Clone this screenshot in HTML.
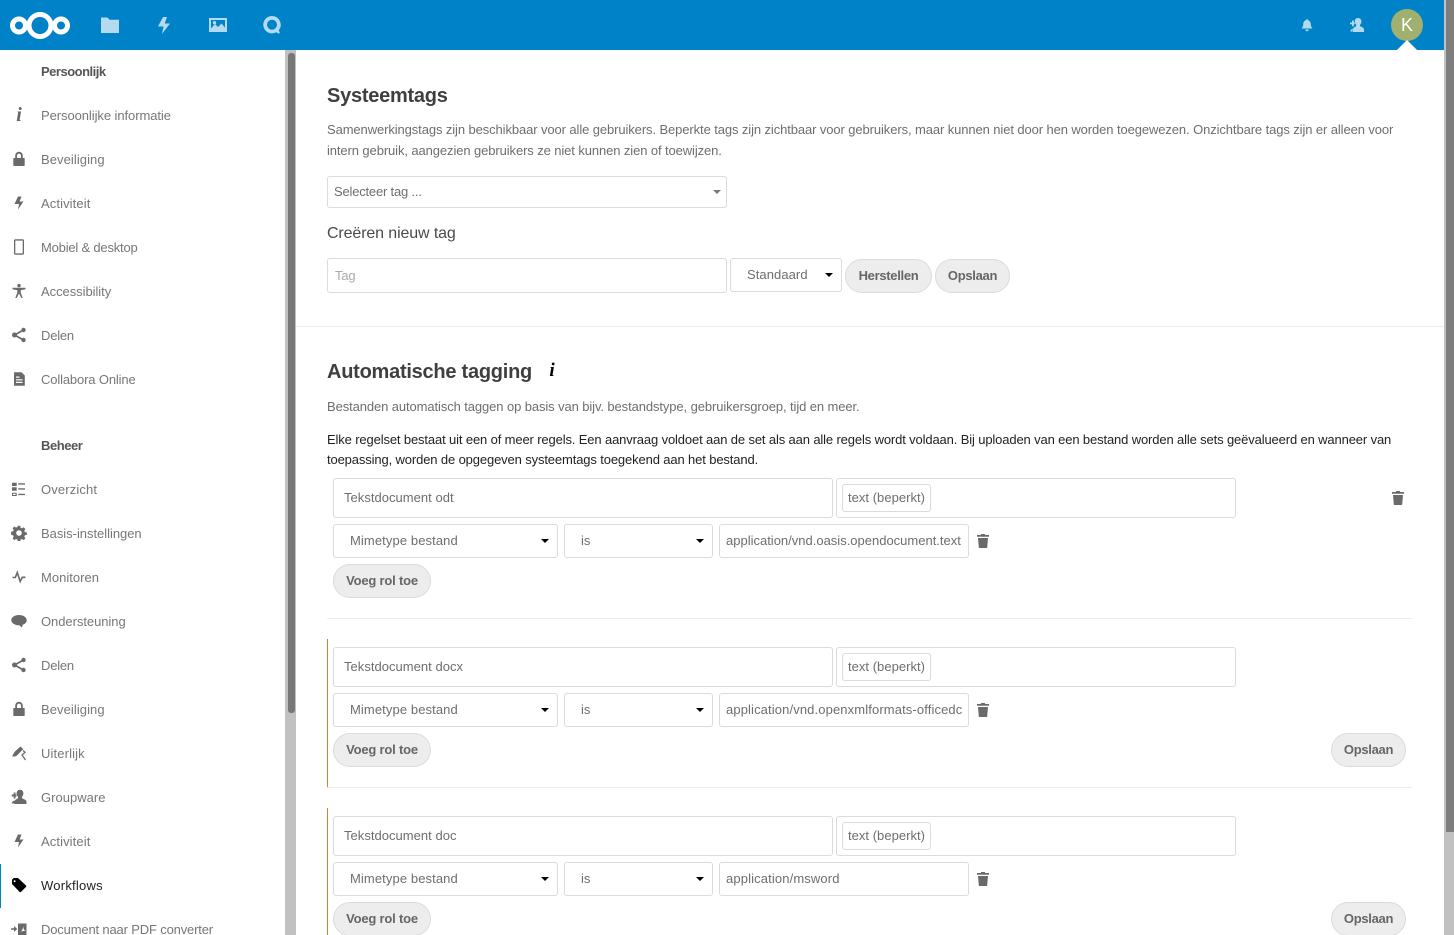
<!DOCTYPE html>
<html lang="nl">
<head>
<meta charset="utf-8">
<title>Workflows</title>
<style>
html,body{margin:0;padding:0;width:1454px;height:935px;overflow:hidden;background:#fff}
body{position:relative;font-family:"Liberation Sans",sans-serif;font-size:13px;color:#6e6e6e}
.a{position:absolute;box-sizing:border-box}
.t{position:absolute;white-space:nowrap;line-height:20px;height:20px}
.side{color:#777;letter-spacing:-.1px;left:41px}
.sh{color:#555;font-weight:bold;letter-spacing:-.5px;left:41px}
.box{position:absolute;box-sizing:border-box;background:#fff;border:1px solid #dbdbdb;border-radius:3px;white-space:nowrap;overflow:hidden;color:#6e6e6e;letter-spacing:.03px}
.btn{position:absolute;box-sizing:border-box;background:#ededed;border:1px solid #dbdbdb;border-radius:17px;height:34px;line-height:32px;text-align:center;font-weight:bold;color:#666;letter-spacing:-.3px}
.arr{position:absolute;width:0;height:0;border-left:4px solid transparent;border-right:4px solid transparent;border-top:4px solid #000}
.ic{position:absolute;width:16px;height:16px;fill:#6a6a6a}
.h{position:absolute;width:20px;height:20px;fill:#b3daef}
.sep{position:absolute;height:1px;background:#ededed}
.bar{position:absolute;width:1px;left:327px;background:#d9822b}
.p{letter-spacing:-.1px}
h2{position:absolute;margin:0;white-space:nowrap;font-size:20px;line-height:24px;color:#3f3f3f;font-weight:bold;letter-spacing:-.25px}
</style>
</head>
<body>
<svg width="0" height="0" style="position:absolute">
<symbol id="bolt" viewBox="0 0 16 16"><path d="M7 1.500 3.500 9H8l-1 5.500L12.500 6.500H8.600L10.500 1.500Z"/></symbol>
<symbol id="lock" viewBox="0 0 16 16"><path d="M8 .8A3.800 3.800 0 0 0 4.200 4.600V7H3a.7.7 0 0 0-.7.7v6.600c0 .4.3.7.7.7h10c.4 0 .7-.3.7-.7V7.700A.7.7 0 0 0 13 7h-1.200V4.600A3.800 3.800 0 0 0 8 .8Zm0 1.800c1.100 0 2 .9 2 2V7H6V4.600c0-1.100.9-2 2-2Z"/></symbol>
<symbol id="phone" viewBox="0 0 16 16"><path d="M4.500.3h7A1.500 1.500 0 0 1 13 1.800v12.400a1.500 1.500 0 0 1-1.500 1.500h-7A1.500 1.500 0 0 1 3 14.200V1.800A1.500 1.500 0 0 1 4.500.3Zm-.2 1.300v12.800h7.400V1.600Z" fill-rule="evenodd"/></symbol>
<symbol id="acc" viewBox="0 0 16 16"><circle cx="8" cy="2.600" r="1.700"/><path d="M1.500 4.800h13v1.400L9.700 7.300v2.200l2 5.500H10.300L8 10.500 5.700 15H4.300l2-5.500V7.300L1.500 6.200Z"/></symbol>
<symbol id="share" viewBox="0 0 16 16"><circle cx="3.500" cy="8" r="2.500"/><circle cx="12.500" cy="3" r="2.200"/><circle cx="12.500" cy="13" r="2.200"/><path d="M3.500 8 12.500 3M3.500 8l9 5" stroke="#6a6a6a" stroke-width="1.800" fill="none"/></symbol>
<symbol id="doc" viewBox="0 0 16 16"><path d="M3 1.200h7.500L13.800 4.500v10.300H3Zm2 4.300v1.200h3.500V5.500Zm0 2.700v1.200h6.500V8.200Zm0 2.600V12h6.500v-1.200Z" fill-rule="evenodd"/></symbol>
<symbol id="list" viewBox="0 0 16 16"><path d="M1 1.700h4.700V5H1ZM7.300 2.200H14v1.400H7.300ZM1 6.300h4.700v3.400H1ZM7.300 7.200H14v1.400H7.300ZM1 11.700h4.700V15H1Zm1 1V14h2.700v-1.300ZM7.300 12.700H14v1.400H7.300Z" fill-rule="evenodd"/></symbol>
<symbol id="gear" viewBox="0 0 16 16"><path d="M6.800.8h2.400l.4 2 1.300.6 1.800-1.100 1.700 1.700-1.100 1.800.6 1.300 2 .4v2.400l-2 .4-.6 1.300 1.100 1.800-1.700 1.700-1.800-1.100-1.300.6-.4 2H6.800l-.4-2-1.300-.6-1.800 1.100-1.700-1.700 1.100-1.800-.6-1.300-2-.4V6.700l2-.4.600-1.300-1.100-1.800 1.700-1.700 1.800 1.100 1.300-.6ZM8 5.200a2.800 2.800 0 1 0 0 5.600 2.800 2.800 0 0 0 0-5.600Z" fill-rule="evenodd"/></symbol>
<symbol id="pulse" viewBox="0 0 16 16"><path d="M1.500 8.500h2.800L6.300 3.500l2.900 9 2-4.200h3.300" fill="none" stroke="#6a6a6a" stroke-width="1.600"/></symbol>
<symbol id="chat" viewBox="0 0 16 16"><path d="M8 2c4.200 0 7.700 2.200 7.700 5.200 0 2.300-2 3.900-4 4.600L10.900 14.500 8.200 12.300C4 12.300.3 10.200.3 7.200.3 4.200 3.800 2 8 2Z"/></symbol>
<symbol id="brush" viewBox="0 0 16 16"><path d="M9.300 1.500 12.300 4 6 10.500c-1 .8-2.800 1.200-4.800 1C2 9.500 3 7.500 4 6.500Z"/><path d="M12 5.500l2 1.800-3 2.700 3.500 5" fill="none" stroke="#6a6a6a" stroke-width="1.300"/></symbol>
<symbol id="people" viewBox="0 0 16 16"><path d="M9 .8c2.200 0 3.400 1.600 3.400 3.700 0 1.300-.6 2.500-1.400 3.300v1.300c0 .7 4.500 1.200 4.500 3.500V15H3.500v-2.400c0-2.300 3.500-2.800 3.500-3.500V7.800C6.200 7 5.600 5.800 5.600 4.500 5.600 2.400 6.800.8 9 .8Z"/><path d="M2.700 3.500v2h-2V7.500h2v2h1.800v-2h1V5.500h-1v-2ZM.8 14.500c0-1.400 1.300-2.600 2.700-3v3Z"/></symbol>
<symbol id="tag" viewBox="0 0 16 16"><path d="M1 2.700 2.700 1H7l8 7.500a1 1 0 0 1 0 1.400l-5 5a1 1 0 0 1-1.400 0L1 7Zm2.600.5a1 1 0 1 0 0 2 1 1 0 0 0 0-2Z" fill="#000" fill-rule="evenodd"/></symbol>
<symbol id="pdf" viewBox="0 0 16 16"><path d="M0 7.200h3V5l3.200 3L3 11V8.800H0Z"/><path d="M7 2.500h8.500v11.500H7Zm2 8.800c1.700-.9 3-3 3.200-6.500-.1 2.600 1 4.500 2.300 5.300-2-.3-3.800-.1-5.500 1.200Z" fill-rule="evenodd"/></symbol>
<symbol id="trash" viewBox="0 0 16 16"><path d="M6.200 1h3.600l.5 1H14v1.800H2V2h3.700ZM3 5h10l-.8 9.200c0 .5-.4.800-.9.800H4.700c-.5 0-.9-.3-.9-.8Z"/></symbol>
</svg>

<!-- header -->
<div class="a" style="left:0;top:0;width:1444px;height:50px;background:#0082c9"></div>
<svg class="a" style="left:8px;top:10px" width="64" height="32" viewBox="8 10 64 32"><g fill="none" stroke="#fff" stroke-width="5"><circle cx="19" cy="25.500" r="6.500"/><circle cx="40" cy="25.500" r="11"/><circle cx="61" cy="25.500" r="6.500"/></g></svg>
<svg class="h" style="left:100px;top:15px" viewBox="0 0 20 20"><path d="M1 2.500h6.500l2 2.200H19V18H1Z"/></svg>
<svg class="h" style="left:154px;top:15px" viewBox="0 0 20 20"><path d="M9 2 4 11.500h5.500L8 19l8-10.500h-5.300L13 2Z"/></svg>
<svg class="h" style="left:208px;top:15px" viewBox="0 0 20 20"><path d="M1 3h18v14H1Zm2 2v8.500L7 9l3 3 3.500-3.500 3.500 4V5Zm3.500 1a1.700 1.700 0 1 1 0 3.400 1.700 1.700 0 0 1 0-3.400Z" fill-rule="evenodd"/></svg>
<svg class="h" style="left:262px;top:15px" viewBox="0 0 20 20"><path d="M10 1a8.700 8.700 0 1 0 4.200 16.300l2.800 1.400.8-1.200-1.100-2.300A8.700 8.700 0 0 0 10 1Zm0 3.700a5 5 0 1 1 0 10 5 5 0 0 1 0-10Z" fill-rule="evenodd"/></svg>
<svg class="h" style="left:1297px;top:15px" viewBox="0 0 20 20"><path d="M10 4.200c.7 0 1.100.5 1.100 1 2 .6 2.700 2.300 2.700 4.300 0 1.600.7 3 1.700 4H4.500c1-1 1.700-2.400 1.700-4 0-2 .7-3.700 2.700-4.300 0-.5.400-1 1.100-1ZM8.300 14.500h3.400a1.700 1.700 0 0 1-3.400 0Z"/></svg>
<svg class="h" style="left:1347px;top:15px" viewBox="0 0 20 20"><path d="M11 3c2.200 0 3.400 1.500 3.400 3.500 0 1.300-.6 2.500-1.400 3.200v1.300c0 .7 4 1.100 4 3.400V17H6v-2.600c0-2.300 3.200-2.700 3.200-3.400V9.700C8.400 9 7.800 7.800 7.800 6.500 7.800 4.500 8.800 3 11 3ZM5 5.500v2H3V9.300h2v2h1.800v-2h.9V7.500h-.9v-2ZM3.300 16.500c0-1.400 1.200-2.500 2.400-2.900v2.900Z"/></svg>
<div class="a" style="left:1391px;top:9px;width:32px;height:32px;border-radius:50%;background:#9fb06f;color:#fff;font-size:18px;line-height:32px;text-align:center">K</div>
<div class="a" style="left:1397px;top:40px;width:0;height:0;border-left:10px solid transparent;border-right:10px solid transparent;border-bottom:10px solid #fff"></div>

<!-- scrollbars -->
<div class="a" style="left:1444px;top:0;width:10px;height:935px;background:#c1c1c1"></div>
<div class="a" style="left:1446px;top:0;width:8px;height:832px;background:#7e7e7e"></div>
<div class="a" style="left:285px;top:50px;width:11px;height:885px;background:#c1c1c1"></div>
<div class="a" style="left:288px;top:53px;width:7px;height:660px;background:#787878;border-radius:3px"></div>

<!-- sidebar -->
<div class="t sh" style="top:62px">Persoonlijk</div>
<div class="a" style="left:13px;top:104px;width:12px;height:22px;font:italic bold 20px/22px 'Liberation Serif',serif;color:#666;text-align:center">i</div>
<div class="t side" style="top:106px;letter-spacing:-.07px">Persoonlijke informatie</div>
<svg class="ic" style="left:11px;top:151px"><use href="#lock"/></svg>
<div class="t side" style="top:150px;letter-spacing:.07px">Beveiliging</div>
<svg class="ic" style="left:11px;top:195px"><use href="#bolt"/></svg>
<div class="t side" style="top:194px;letter-spacing:.1px">Activiteit</div>
<svg class="ic" style="left:11px;top:239px"><use href="#phone"/></svg>
<div class="t side" style="top:238px;letter-spacing:-.2px">Mobiel &amp; desktop</div>
<svg class="ic" style="left:11px;top:283px"><use href="#acc"/></svg>
<div class="t side" style="top:282px;letter-spacing:-.05px">Accessibility</div>
<svg class="ic" style="left:11px;top:327px"><use href="#share"/></svg>
<div class="t side" style="top:326px;letter-spacing:-.2px">Delen</div>
<svg class="ic" style="left:11px;top:371px"><use href="#doc"/></svg>
<div class="t side" style="top:370px;letter-spacing:-.14px">Collabora Online</div>
<div class="t sh" style="top:436px;letter-spacing:-.45px">Beheer</div>
<svg class="ic" style="left:11px;top:481px"><use href="#list"/></svg>
<div class="t side" style="top:480px;letter-spacing:.13px">Overzicht</div>
<svg class="ic" style="left:11px;top:525px"><use href="#gear"/></svg>
<div class="t side" style="top:524px;letter-spacing:-.03px">Basis-instellingen</div>
<svg class="ic" style="left:11px;top:569px"><use href="#pulse"/></svg>
<div class="t side" style="top:568px;letter-spacing:.02px">Monitoren</div>
<svg class="ic" style="left:11px;top:613px"><use href="#chat"/></svg>
<div class="t side" style="top:612px;letter-spacing:-.05px">Ondersteuning</div>
<svg class="ic" style="left:11px;top:657px"><use href="#share"/></svg>
<div class="t side" style="top:656px;letter-spacing:-.2px">Delen</div>
<svg class="ic" style="left:11px;top:701px"><use href="#lock"/></svg>
<div class="t side" style="top:700px;letter-spacing:.07px">Beveiliging</div>
<svg class="ic" style="left:11px;top:745px"><use href="#brush"/></svg>
<div class="t side" style="top:744px;letter-spacing:.13px">Uiterlijk</div>
<svg class="ic" style="left:11px;top:789px"><use href="#people"/></svg>
<div class="t side" style="top:788px;letter-spacing:.02px">Groupware</div>
<svg class="ic" style="left:11px;top:833px"><use href="#bolt"/></svg>
<div class="t side" style="top:832px;letter-spacing:.1px">Activiteit</div>
<div class="a" style="left:0;top:864px;width:1px;height:44px;background:#0082c9"></div>
<svg class="ic" style="left:11px;top:877px"><use href="#tag"/></svg>
<div class="t side" style="top:876px;color:#222;letter-spacing:.24px">Workflows</div>
<svg class="ic" style="left:11px;top:921px"><use href="#pdf"/></svg>
<div class="t side" style="top:920px;letter-spacing:-.16px">Document naar PDF converter</div>

<!-- Systeemtags -->
<h2 style="left:327px;top:84px">Systeemtags</h2>
<div class="t p" style="left:327px;top:120px">Samenwerkingstags zijn beschikbaar voor alle gebruikers. Beperkte tags zijn zichtbaar voor gebruikers, maar kunnen niet door hen worden toegewezen. Onzichtbare tags zijn er alleen voor</div>
<div class="t p" style="left:327px;top:141px">intern gebruik, aangezien gebruikers ze niet kunnen zien of toewijzen.</div>
<div class="box" style="left:327px;top:176px;width:400px;height:32px;line-height:30px;padding-left:6px;letter-spacing:-.2px">Selecteer tag ...</div>
<div class="arr" style="left:713px;top:190px;border-top-color:#777"></div>
<div class="t" style="left:327px;top:224px;font-size:16px;color:#4a4a4a;letter-spacing:-.12px">Creëren nieuw tag</div>
<div class="box" style="left:327px;top:258px;width:400px;height:35px;line-height:33px;padding-left:7px;color:#aaa;letter-spacing:-.15px">Tag</div>
<div class="box" style="left:730px;top:258px;width:112px;height:34px;line-height:31px;padding-left:16px;letter-spacing:.07px">Standaard</div>
<div class="arr" style="left:825px;top:273px"></div>
<div class="btn" style="left:845px;top:259px;width:87px">Herstellen</div>
<div class="btn" style="left:935px;top:259px;width:75px">Opslaan</div>
<div class="sep" style="left:296px;top:326px;width:1148px"></div>

<!-- Automatische tagging -->
<h2 style="left:327px;top:360px">Automatische tagging</h2>
<div class="a" style="left:546px;top:360px;width:12px;height:22px;font:italic bold 19px/22px 'Liberation Serif',serif;color:#000;text-align:center">i</div>
<div class="t" style="left:327px;top:397px;letter-spacing:-.1px">Bestanden automatisch taggen op basis van bijv. bestandstype, gebruikersgroep, tijd en meer.</div>
<div class="t" style="left:327px;top:430px;color:#222;letter-spacing:-.135px">Elke regelset bestaat uit een of meer regels. Een aanvraag voldoet aan de set als aan alle regels wordt voldaan. Bij uploaden van een bestand worden alle sets geëvalueerd en wanneer van</div>
<div class="t" style="left:327px;top:450px;color:#222;letter-spacing:-.13px">toepassing, worden de opgegeven systeemtags toegekend aan het bestand.</div>

<!-- rule 1 -->
<div class="box" style="left:333px;top:478px;width:500px;height:40px;line-height:38px;padding-left:10px">Tekstdocument odt</div>
<div class="box" style="left:836px;top:478px;width:400px;height:40px"></div>
<div class="box" style="left:842px;top:484px;width:89px;height:28px;line-height:26px;text-align:center">text (beperkt)</div>
<svg class="ic" style="left:1390px;top:490px"><use href="#trash"/></svg>
<div class="box" style="left:333px;top:524px;width:225px;height:34px;line-height:32px;padding-left:16px;letter-spacing:.1px">Mimetype bestand</div>
<div class="arr" style="left:541px;top:539px"></div>
<div class="box" style="left:564px;top:524px;width:149px;height:34px;line-height:32px;padding-left:16px">is</div>
<div class="arr" style="left:696px;top:539px"></div>
<div class="box" style="left:719px;top:524px;width:250px;height:34px;line-height:32px;padding:0 6px;letter-spacing:0">application/vnd.oasis.opendocument.text</div>
<svg class="ic" style="left:975px;top:533px"><use href="#trash"/></svg>
<div class="btn" style="left:333px;top:564px;width:98px;letter-spacing:-.2px">Voeg rol toe</div>
<div class="sep" style="left:327px;top:618px;width:1086px"></div>

<!-- rule 2 -->
<div class="bar" style="top:639px;height:149px"></div>
<div class="box" style="left:333px;top:647px;width:500px;height:40px;line-height:38px;padding-left:10px">Tekstdocument docx</div>
<div class="box" style="left:836px;top:647px;width:400px;height:40px"></div>
<div class="box" style="left:842px;top:653px;width:89px;height:28px;line-height:26px;text-align:center">text (beperkt)</div>
<div class="box" style="left:333px;top:693px;width:225px;height:34px;line-height:32px;padding-left:16px;letter-spacing:.1px">Mimetype bestand</div>
<div class="arr" style="left:541px;top:708px"></div>
<div class="box" style="left:564px;top:693px;width:149px;height:34px;line-height:32px;padding-left:16px">is</div>
<div class="arr" style="left:696px;top:708px"></div>
<div class="box" style="left:719px;top:693px;width:250px;height:34px;line-height:32px;padding:0 6px;letter-spacing:.12px">application/vnd.openxmlformats-officedc</div>
<svg class="ic" style="left:975px;top:702px"><use href="#trash"/></svg>
<div class="btn" style="left:333px;top:733px;width:98px;letter-spacing:-.2px">Voeg rol toe</div>
<div class="btn" style="left:1331px;top:733px;width:75px">Opslaan</div>
<div class="sep" style="left:327px;top:787px;width:1086px"></div>

<!-- rule 3 -->
<div class="bar" style="top:808px;height:127px"></div>
<div class="box" style="left:333px;top:816px;width:500px;height:40px;line-height:38px;padding-left:10px">Tekstdocument doc</div>
<div class="box" style="left:836px;top:816px;width:400px;height:40px"></div>
<div class="box" style="left:842px;top:822px;width:89px;height:28px;line-height:26px;text-align:center">text (beperkt)</div>
<div class="box" style="left:333px;top:862px;width:225px;height:34px;line-height:32px;padding-left:16px;letter-spacing:.1px">Mimetype bestand</div>
<div class="arr" style="left:541px;top:877px"></div>
<div class="box" style="left:564px;top:862px;width:149px;height:34px;line-height:32px;padding-left:16px">is</div>
<div class="arr" style="left:696px;top:877px"></div>
<div class="box" style="left:719px;top:862px;width:250px;height:34px;line-height:32px;padding:0 6px;letter-spacing:.13px">application/msword</div>
<svg class="ic" style="left:975px;top:871px"><use href="#trash"/></svg>
<div class="btn" style="left:333px;top:902px;width:98px;letter-spacing:-.2px">Voeg rol toe</div>
<div class="btn" style="left:1331px;top:902px;width:75px">Opslaan</div>
</body>
</html>
